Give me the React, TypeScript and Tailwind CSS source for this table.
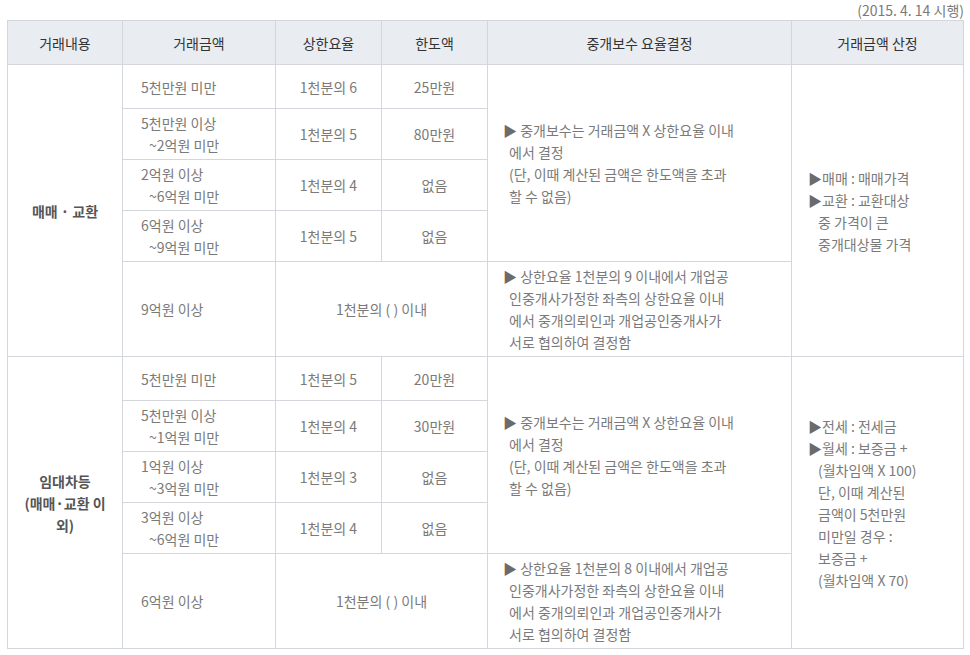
import React from "react";

const td = "border border-[#d3d6db] align-middle";
const amt = `${td} text-left pl-[18px]`;
const ctr = `${td} text-center`;

function Amount({ a, b }: { a: string; b?: string }) {
  return (
    <td className={amt}>
      <div>{a}</div>
      {b && <div className="pl-[8px]">{b}</div>}
    </td>
  );
}

function Desc({ lines, rows }: { lines: string[]; rows?: number }) {
  return (
    <td rowSpan={rows} className={`${td} text-left pl-[15px]`}>
      {lines.map((l, i) =>
        i === 0 ? (
          <div key={i}>
            <span className="text-[#6b6b6b]">▶</span> {l}
          </div>
        ) : (
          <div key={i} className="pl-[6px]">
            {l}
          </div>
        )
      )}
    </td>
  );
}

function Calc({ items }: { items: { first: string; rest: string[] }[] }) {
  return (
    <td rowSpan={5} className={`${td} text-left pl-[16px]`}>
      {items.map((it, i) => (
        <React.Fragment key={i}>
          <div>
            <span className="text-[#6b6b6b]">▶</span>
            {it.first}
          </div>
          {it.rest.map((r, j) => (
            <div key={j} className="pl-[10px]">
              {r}
            </div>
          ))}
        </React.Fragment>
      ))}
    </td>
  );
}

const desc1 = [
  "중개보수는 거래금액 X 상한요율 이내",
  "에서 결정",
  "(단, 이때 계산된 금액은 한도액을 초과",
  "할 수 없음)",
];

export default function App() {
  return (
    <div className="bg-white w-[970px] h-[655px] pl-[7px] pr-[7px] font-['Noto_Sans_CJK_KR','Noto_Sans',sans-serif] text-[14px] leading-[22px] text-[#7a7a7a]">
      <div className="text-right h-[20px] leading-[20px] -mr-[1px]">(2015. 4. 14 시행)</div>
      <table className="table-fixed border-collapse w-[956px]">
        <colgroup>
          <col className="w-[115px]" />
          <col className="w-[153px]" />
          <col className="w-[106px]" />
          <col className="w-[106px]" />
          <col className="w-[304px]" />
          <col className="w-[172px]" />
        </colgroup>
        <thead>
          <tr className="h-[44px] bg-[#e9ecf1] text-[#333]">
            <th className={`${ctr} font-normal`}>거래내용</th>
            <th className={`${ctr} font-normal`}>거래금액</th>
            <th className={`${ctr} font-normal`}>상한요율</th>
            <th className={`${ctr} font-normal`}>한도액</th>
            <th className={`${ctr} font-normal`}>중개보수 요율결정</th>
            <th className={`${ctr} font-normal`}>거래금액 산정</th>
          </tr>
        </thead>
        <tbody>
          <tr className="h-[44px]">
            <td rowSpan={5} className={`${ctr} font-bold text-[#555]`}>
              매매 · 교환
            </td>
            <Amount a="5천만원 미만" />
            <td className={ctr}>1천분의 6</td>
            <td className={ctr}>25만원</td>
            <Desc lines={desc1} rows={4} />
            <Calc
              items={[
                { first: "매매 : 매매가격", rest: [] },
                { first: "교환 : 교환대상", rest: ["중 가격이 큰", "중개대상물 가격"] },
              ]}
            />
          </tr>
          <tr className="h-[51px]">
            <Amount a="5천만원 이상" b="~2억원 미만" />
            <td className={ctr}>1천분의 5</td>
            <td className={ctr}>80만원</td>
          </tr>
          <tr className="h-[51px]">
            <Amount a="2억원 이상" b="~6억원 미만" />
            <td className={ctr}>1천분의 4</td>
            <td className={ctr}>없음</td>
          </tr>
          <tr className="h-[51px]">
            <Amount a="6억원 이상" b="~9억원 미만" />
            <td className={ctr}>1천분의 5</td>
            <td className={ctr}>없음</td>
          </tr>
          <tr className="h-[95px]">
            <Amount a="9억원 이상" />
            <td colSpan={2} className={ctr}>
              1천분의 ( ) 이내
            </td>
            <Desc
              lines={[
                "상한요율 1천분의 9 이내에서 개업공",
                "인중개사가정한 좌측의 상한요율 이내",
                "에서 중개의뢰인과 개업공인중개사가",
                "서로 협의하여 결정함",
              ]}
            />
          </tr>

          <tr className="h-[44px]">
            <td rowSpan={5} className={`${ctr} font-bold text-[#555]`}>
              임대차등
              <br />
              (매매·교환 이
              <br />
              외)
            </td>
            <Amount a="5천만원 미만" />
            <td className={ctr}>1천분의 5</td>
            <td className={ctr}>20만원</td>
            <Desc lines={desc1} rows={4} />
            <Calc
              items={[
                { first: "전세 : 전세금", rest: [] },
                {
                  first: "월세 : 보증금 +",
                  rest: [
                    "(월차임액 X 100)",
                    "단, 이때 계산된",
                    "금액이 5천만원",
                    "미만일 경우 :",
                    "보증금 +",
                    "(월차임액 X 70)",
                  ],
                },
              ]}
            />
          </tr>
          <tr className="h-[51px]">
            <Amount a="5천만원 이상" b="~1억원 미만" />
            <td className={ctr}>1천분의 4</td>
            <td className={ctr}>30만원</td>
          </tr>
          <tr className="h-[51px]">
            <Amount a="1억원 이상" b="~3억원 미만" />
            <td className={ctr}>1천분의 3</td>
            <td className={ctr}>없음</td>
          </tr>
          <tr className="h-[51px]">
            <Amount a="3억원 이상" b="~6억원 미만" />
            <td className={ctr}>1천분의 4</td>
            <td className={ctr}>없음</td>
          </tr>
          <tr className="h-[95px]">
            <Amount a="6억원 이상" />
            <td colSpan={2} className={ctr}>
              1천분의 ( ) 이내
            </td>
            <Desc
              lines={[
                "상한요율 1천분의 8 이내에서 개업공",
                "인중개사가정한 좌측의 상한요율 이내",
                "에서 중개의뢰인과 개업공인중개사가",
                "서로 협의하여 결정함",
              ]}
            />
          </tr>
        </tbody>
      </table>
    </div>
  );
}
